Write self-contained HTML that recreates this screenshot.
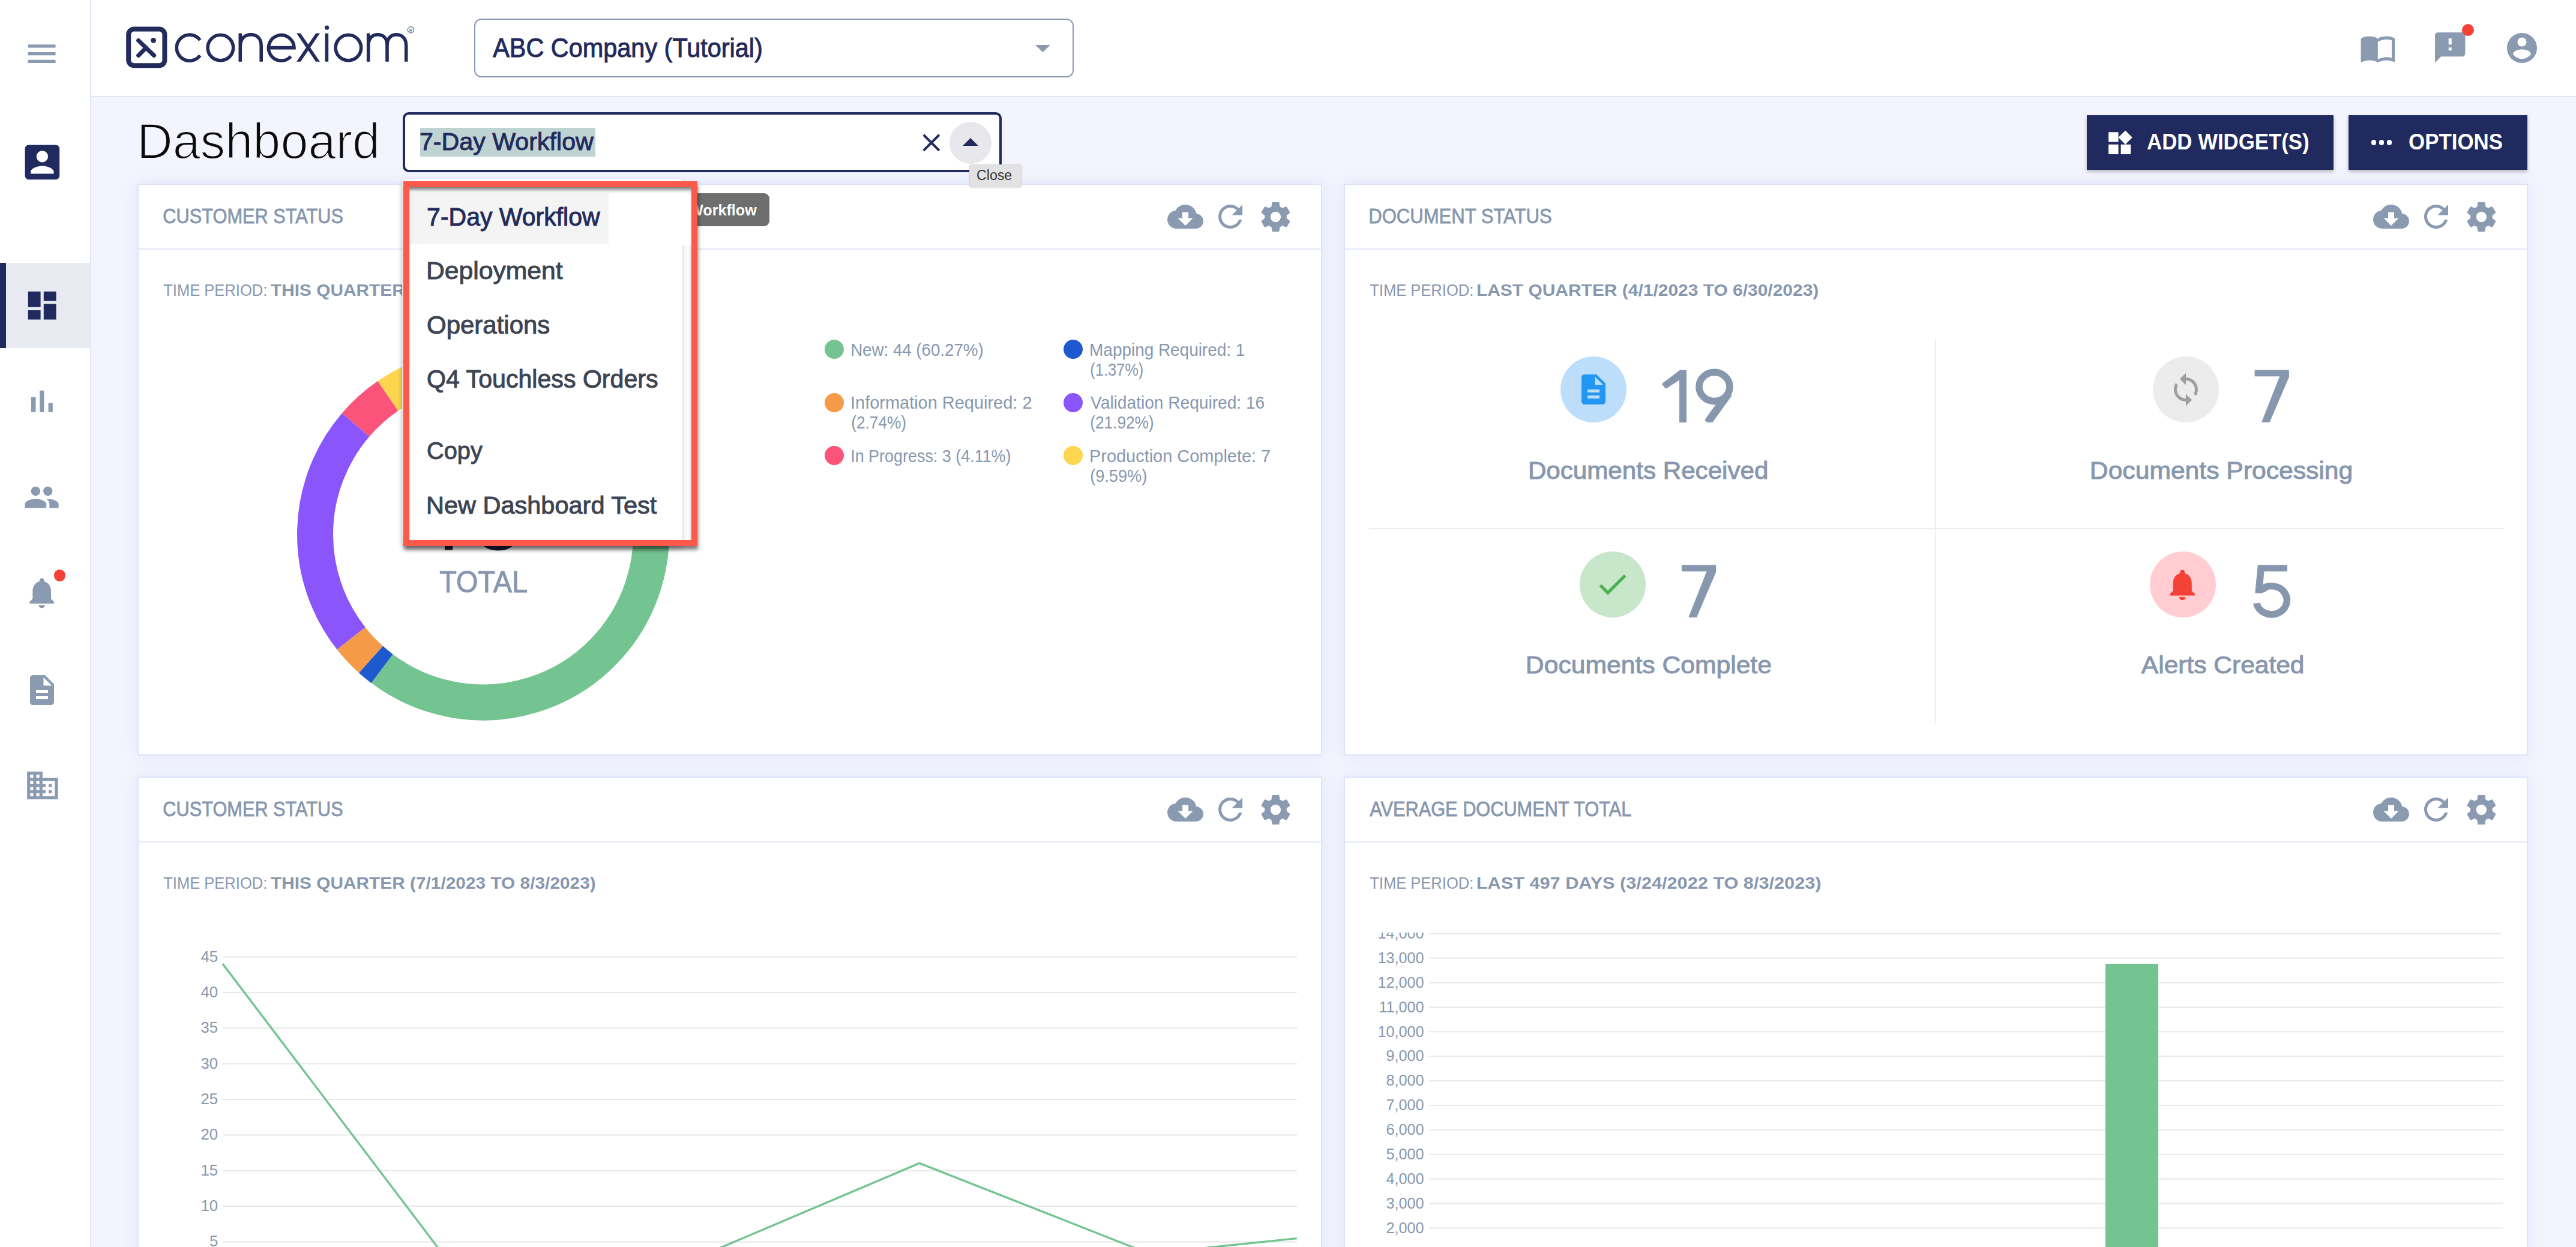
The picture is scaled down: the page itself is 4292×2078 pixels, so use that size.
<!DOCTYPE html>
<html><head><meta charset="utf-8"><style>*{margin:0;padding:0;box-sizing:border-box}
html,body{width:4292px;height:2078px;overflow:hidden;background:#f3f4fd;font-family:"Liberation Sans",sans-serif;position:relative}
.a{position:absolute}
.t{position:absolute;white-space:nowrap;line-height:1}
svg{display:block;overflow:visible}
.card{position:absolute;background:#fff;border:2px solid #dde4fa;box-shadow:0 0 28px rgba(110,140,235,.13)}
b{font-weight:bold}
</style></head><body>
<div class="a" style="left:0;top:0;width:150px;height:2078px;background:#fff"></div>
<div class="a" style="left:150px;top:0px;width:2px;height:2078px;background:#e1e6f9;"></div>
<svg class="a" style="left:39.10px;top:59.00px;" width="61.20" height="61.20" viewBox="0 0 24 24"><path fill="#8a9ab1" d="M3 18h18v-2H3v2zm0-5h18v-2H3v2zm0-7v2h18V6H3z"/></svg>
<svg class="a" style="left:31.60px;top:231.60px;" width="76.80" height="76.80" viewBox="0 0 24 24"><path fill="#212a5e" d="M3 5v14c0 1.1.89 2 2 2h14c1.1 0 2-.9 2-2V5c0-1.1-.9-2-2-2H5c-1.11 0-2 .9-2 2zm12 4c0 1.66-1.34 3-3 3s-3-1.34-3-3 1.34-3 3-3 3 1.34 3 3zm-9 8c0-2 4-3.1 6-3.1s6 1.1 6 3.1v1H6v-1z"/></svg>
<div class="a" style="left:0px;top:438px;width:150px;height:142px;background:#e8eaf1;"></div>
<div class="a" style="left:0px;top:438px;width:10px;height:142px;background:#212a5e;"></div>
<svg class="a" style="left:38.80px;top:478.30px;" width="62.40" height="62.40" viewBox="0 0 24 24"><path fill="#212a5e" d="M3 13h8V3H3v10zm0 8h8v-6H3v6zm10 0h8V11h-8v10zm0-18v6h8V3h-8z"/></svg>
<svg class="a" style="left:39.16px;top:638.16px;" width="61.68" height="61.68" viewBox="0 0 24 24"><path fill="#8a9ab1" d="M5 9.2h3V19H5zM10.6 5h2.8v14h-2.8zm5.6 8H19v6h-2.8z"/></svg>
<svg class="a" style="left:39.20px;top:798.40px;" width="61.20" height="61.20" viewBox="0 0 24 24"><path fill="#8a9ab1" d="M16 11c1.66 0 2.99-1.34 2.99-3S17.66 5 16 5c-1.66 0-3 1.34-3 3s1.34 3 3 3zm-8 0c1.66 0 2.99-1.34 2.99-3S9.66 5 8 5C6.34 5 5 6.34 5 8s1.34 3 3 3zm0 2c-2.33 0-7 1.17-7 3.5V19h14v-2.5c0-2.33-4.67-3.5-7-3.5zm8 0c-.29 0-.62.02-.97.05 1.16.84 1.97 1.97 1.97 3.45V19h6v-2.5c0-2.33-4.67-3.5-7-3.5z"/></svg>
<svg class="a" style="left:39.28px;top:956.78px;" width="61.44" height="61.44" viewBox="0 0 24 24"><path fill="#8a9ab1" d="M12 22c1.1 0 2-.9 2-2h-4c0 1.1.89 2 2 2zm6-6v-5c0-3.07-1.64-5.64-4.5-6.32V4c0-.83-.67-1.5-1.5-1.5s-1.5.67-1.5 1.5v.68C7.63 5.36 6 7.92 6 11v5l-2 2v1h16v-1l-2-2z"/></svg>
<div class="a" style="left:89.80000000000001px;top:949.4px;width:19.2px;height:19.2px;border-radius:50%;background:#f44336;"></div>
<svg class="a" style="left:40.00px;top:1120.00px;" width="60.00" height="60.00" viewBox="0 0 24 24"><path fill="#8a9ab1" d="M14 2H6c-1.1 0-1.99.9-1.99 2L4 20c0 1.1.89 2 1.99 2H18c1.1 0 2-.9 2-2V8l-6-6zm2 16H8v-2h8v2zm0-4H8v-2h8v2zm-3-5V3.5L18.5 9H13z"/></svg>
<svg class="a" style="left:39.66px;top:1278.16px;" width="61.68" height="61.68" viewBox="0 0 24 24"><path fill="#8a9ab1" d="M12 7V3H2v18h20V7H12zM6 19H4v-2h2v2zm0-4H4v-2h2v2zm0-4H4V9h2v2zm0-4H4V5h2v2zm4 12H8v-2h2v2zm0-4H8v-2h2v2zm0-4H8V9h2v2zm0-4H8V5h2v2zm10 12h-8v-2h2v-2h-2v-2h2v-2h-2V9h8v10zm-2-8h-2v2h2v-2zm0 4h-2v2h2v-2z"/></svg>
<div class="a" style="left:152px;top:0px;width:4140px;height:160px;background:#fff;"></div>
<div class="a" style="left:152px;top:160px;width:4140px;height:2px;background:#e1e6f9;"></div>
<svg class="a" style="left:200px;top:35px" width="500" height="90" viewBox="200 35 500 90"><defs><clipPath id="xc"><rect x="480" y="55.6" width="70" height="47.1"/></clipPath></defs>
<rect x="214.2" y="48.5" width="60.2" height="60.7" rx="9" ry="9" fill="none" stroke="#222b5c" stroke-width="8"/>
<g stroke="#222b5c" stroke-width="7" stroke-linecap="round" fill="none">
<line x1="230.6" y1="67.5" x2="256.6" y2="92.4"/><line x1="230.6" y1="92.4" x2="243.5" y2="79.6"/></g>
<circle cx="255.6" cy="67.3" r="4.4" fill="#222b5c"/>
<g stroke="#222b5c" stroke-width="5.6" fill="none">
<path d="M333.3 66.8 A21.6 21.6 0 1 0 333.3 92.4"/>
<circle cx="367.4" cy="79.5" r="21.3"/>
<path d="M400.3 102.7 V55.6 M400.3 78 C400.3 63 409 57.8 418 57.8 C427 57.8 435.2 63 435.2 76 V102.7"/>
<path d="M447 79.6 H490 A21.3 21.3 0 1 0 484.6 94"/>
<path clip-path="url(#xc)" d="M494.5 51.2 L532.5 107.1 M532.5 51.2 L494.5 107.1"/>
<path d="M544.4 55.6 V102.7"/>
<circle cx="580.4" cy="79.5" r="21.3"/>
<path d="M613.7 102.7 V55.6 M613.7 76 C613.7 63 621 57.8 629.5 57.8 C638 57.8 645 63 645 76 V102.7 M645 76 C645 63 652 57.8 660.5 57.8 C669 57.8 676.7 63 676.7 76 V102.7"/>
</g>
<circle cx="544.6" cy="46.1" r="3.6" fill="#222b5c"/>
<circle cx="684.5" cy="49.8" r="5.2" fill="none" stroke="#222b5c" stroke-width="1"/>
<text x="684.5" y="52.5" font-size="7" text-anchor="middle" fill="#222b5c" font-family="Liberation Sans">R</text>
</svg>
<div class="a" style="left:790px;top:31px;width:999px;height:98px;border:2px solid #8a9ab4;border-radius:12px;background:#fff"></div>
<div id="company" class="t txt" style="left:821.49px;top:58.17px;font-size:43.91px;color:#222b5c;font-weight:normal;transform:scaleX(0.9432);transform-origin:3.51px 0;-webkit-text-stroke:1.00px #222b5c;">ABC Company (Tutorial)</div>
<svg class="a" style="left:1725px;top:75px" width="25" height="12" viewBox="0 0 25 12"><path d="M0 0H25L12.5 12z" fill="#8a9ab1"/></svg>
<svg class="a" style="left:3930.86px;top:48.79px;" width="61.68" height="61.68" viewBox="0 0 24 24"><path fill="#8a9ab1" d="M21 5c-1.11-.35-2.33-.5-3.5-.5-1.95 0-4.05.4-5.5 1.5-1.45-1.1-3.55-1.5-5.5-1.5S2.45 4.9 1 6v14.65c0 .25.25.5.5.5.1 0 .15-.05.25-.05C3.1 20.45 5.05 20 6.5 20c1.95 0 4.05.4 5.5 1.5 1.35-.85 3.8-1.5 5.5-1.5 1.65 0 3.35.3 4.75 1.05.1.05.15.05.25.05.25 0 .5-.25.5-.5V6c-.6-.45-1.25-.75-2-1zm0 13.5c-1.1-.35-2.3-.5-3.5-.5-1.7 0-4.15.65-5.5 1.5V8c1.35-.85 3.8-1.5 5.5-1.5 1.2 0 2.4.15 3.5.5v11.5z"/></svg>
<svg class="a" style="left:4051.76px;top:49.46px;" width="60.48" height="60.48" viewBox="0 0 24 24"><path fill="#8a9ab1" d="M20 2H4c-1.1 0-1.99.9-1.99 2L2 22l4-4h14c1.1 0 2-.9 2-2V4c0-1.1-.9-2-2-2zm-7 12h-2v-2h2v2zm0-4h-2V6h2v4z"/></svg>
<div class="a" style="left:4101.7px;top:40px;width:20px;height:20px;border-radius:50%;background:#f44336;"></div>
<svg class="a" style="left:4171.80px;top:49.70px;" width="60.00" height="60.00" viewBox="0 0 24 24"><path fill="#8a9ab1" d="M12 2C6.48 2 2 6.48 2 12s4.48 10 10 10 10-4.48 10-10S17.52 2 12 2zm0 3c1.66 0 3 1.34 3 3s-1.34 3-3 3-3-1.34-3-3 1.34-3 3-3zm0 14.2c-2.5 0-4.71-1.28-6-3.22.03-1.99 4-3.08 6-3.08 1.99 0 5.97 1.09 6 3.08-1.29 1.94-3.5 3.22-6 3.22z"/></svg>
<div id="dash" class="t txt" style="left:228.39px;top:194.78px;font-size:82.61px;color:#0b0b0b;font-weight:normal;transform:scaleX(1.0026);transform-origin:6.61px 0;-webkit-text-stroke:2px #f3f4fd;">Dashboard</div>
<div class="a" style="left:671px;top:187px;width:998px;height:100px;border:4.5px solid #1f2a5c;border-radius:10px;background:#fff"></div>
<div class="a" style="left:700px;top:213px;width:292px;height:48px;background:#bfd3d3;"></div>
<div id="wfin" class="t txt" style="left:699.33px;top:216.46px;font-size:40.87px;color:#222b5c;font-weight:normal;transform:scaleX(1.0077);transform-origin:3.27px 0;-webkit-text-stroke:0.98px #222b5c;">7-Day Workflow</div>
<svg class="a" style="left:1526.66px;top:213.16px;" width="49.68" height="49.68" viewBox="0 0 24 24"><path fill="#222b5c" d="M19 6.41L17.59 5 12 10.59 6.41 5 5 6.41 10.59 12 5 17.59 6.41 19 12 13.41 17.59 19 19 17.59 13.41 12z"/></svg>
<div class="a" style="left:1582px;top:203px;width:70px;height:70px;border-radius:50%;background:#e8e8ec;"></div>
<svg class="a" style="left:1604px;top:230px" width="26" height="13" viewBox="0 0 26 13"><path d="M0 13H26L13 0z" fill="#222b5c"/></svg>
<div class="a" style="left:3477px;top:192px;width:411px;height:91px;background:#212a5e;box-shadow:0 3px 6px rgba(0,0,0,.25)"></div>
<svg class="a" style="left:3507.05px;top:213.73px;" width="49.20" height="49.20" viewBox="0 0 24 24"><path fill="#fff" d="M13 13v8h8v-8h-8zM3 21h8v-8H3v8zM3 3v8h8V3H3zm13.66-1.31L11 7.34 16.66 13l5.66-5.66-5.66-5.65z"/></svg>
<div id="addw" class="t txt" style="left:3577.10px;top:218.70px;font-size:36.23px;color:#fff;font-weight:bold;transform:scaleX(0.9603);transform-origin:2.90px 0;">ADD WIDGET(S)</div>
<div class="a" style="left:3913px;top:192px;width:298px;height:91px;background:#212a5e;box-shadow:0 3px 6px rgba(0,0,0,.25)"></div>
<div class="a" style="left:3950.7px;top:233.29999999999998px;width:8.6px;height:8.6px;border-radius:50%;background:#fff;"></div>
<div class="a" style="left:3963.7px;top:233.29999999999998px;width:8.6px;height:8.6px;border-radius:50%;background:#fff;"></div>
<div class="a" style="left:3976.7px;top:233.29999999999998px;width:8.6px;height:8.6px;border-radius:50%;background:#fff;"></div>
<div id="opts" class="t txt" style="left:4013.10px;top:218.70px;font-size:36.23px;color:#fff;font-weight:bold;transform:scaleX(0.9627);transform-origin:2.90px 0;">OPTIONS</div>
<div class="card" style="left:229px;top:306px;width:1974px;height:952.5px"></div>
<div class="a" style="left:231px;top:414px;width:1970px;height:2px;background:#e3e8f8;"></div>
<div id="ct1" class="t txt" style="left:271.22px;top:342.93px;font-size:34.78px;color:#8797ae;font-weight:normal;transform:scaleX(0.8847);transform-origin:2.78px 0;-webkit-text-stroke:0.83px #8797ae;">CUSTOMER STATUS</div>
<div id="tp1n" class="t txt" style="left:271.72px;top:468.73px;font-size:28.55px;color:#8797ae;font-weight:normal;transform:scaleX(0.8942);transform-origin:2.28px 0;">TIME PERIOD:</div>
<div id="tp1b" class="t txt" style="left:451.12px;top:468.73px;font-size:28.55px;color:#8797ae;font-weight:bold;transform:scaleX(1.0454);transform-origin:2.28px 0;">THIS QUARTER (7/1/2023 TO 8/3/2023)</div>
<svg class="a" style="left:1945.00px;top:331.00px;" width="60.00" height="60.00" viewBox="0 0 24 24"><path fill="#8a9ab1" d="M19.35 10.04C18.67 6.59 15.64 4 12 4 9.11 4 6.6 5.64 5.35 8.04 2.34 8.36 0 10.91 0 14c0 3.31 2.69 6 6 6h13c2.76 0 5-2.24 5-5 0-2.64-2.05-4.78-4.65-4.96zM17 13l-5 5-5-5h3V9h4v4h3z"/></svg>
<svg class="a" style="left:2020.00px;top:330.50px;" width="60.00" height="60.00" viewBox="0 0 24 24"><path fill="#8a9ab1" d="M17.65 6.35C16.2 4.9 14.21 4 12 4c-4.42 0-7.99 3.58-7.99 8s3.57 8 7.99 8c3.73 0 6.84-2.55 7.73-6h-2.08c-.82 2.33-3.04 4-5.65 4-3.31 0-6-2.69-6-6s2.69-6 6-6c1.66 0 3.14.69 4.22 1.78L13 11h7V4l-2.35 2.35z"/></svg>
<svg class="a" style="left:2095.60px;top:331.60px;" width="58.80" height="58.80" viewBox="0 0 24 24"><path fill="#8a9ab1" d="M19.43 12.98c.04-.32.07-.64.07-.98s-.03-.66-.07-.98l2.11-1.65c.19-.15.24-.42.12-.64l-2-3.46c-.12-.22-.39-.3-.61-.22l-2.49 1c-.52-.4-1.08-.73-1.69-.98l-.38-2.65C14.46 2.18 14.25 2 14 2h-4c-.25 0-.46.18-.49.42l-.38 2.65c-.61.25-1.17.59-1.69.98l-2.49-1c-.23-.09-.49 0-.61.22l-2 3.46c-.13.22-.07.49.12.64l2.11 1.65c-.04.32-.07.65-.07.98s.03.66.07.98l-2.11 1.65c-.19.15-.24.42-.12.64l2 3.46c.12.22.39.3.61.22l2.49-1c.52.4 1.08.73 1.69.98l.38 2.65c.03.24.24.42.49.42h4c.25 0 .46-.18.49-.42l.38-2.65c.61-.25 1.17-.59 1.69-.98l2.49 1c.23.09.49 0 .61-.22l2-3.46c.12-.22.07-.49-.12-.64l-2.11-1.65zM12 15.5c-1.93 0-3.5-1.57-3.5-3.5s1.57-3.5 3.5-3.5 3.5 1.57 3.5 3.5-1.57 3.5-3.5 3.5z"/></svg>
<div class="card" style="left:2239px;top:306px;width:1973px;height:952.5px"></div>
<div class="a" style="left:2241px;top:414px;width:1969px;height:2px;background:#e3e8f8;"></div>
<div id="ct2" class="t txt" style="left:2280.22px;top:342.93px;font-size:34.78px;color:#8797ae;font-weight:normal;transform:scaleX(0.8930);transform-origin:2.78px 0;-webkit-text-stroke:0.83px #8797ae;">DOCUMENT STATUS</div>
<div id="tp2n" class="t txt" style="left:2281.72px;top:468.73px;font-size:28.55px;color:#8797ae;font-weight:normal;transform:scaleX(0.8942);transform-origin:2.28px 0;">TIME PERIOD:</div>
<div id="tp2b" class="t txt" style="left:2460.12px;top:468.73px;font-size:28.55px;color:#8797ae;font-weight:bold;transform:scaleX(1.0492);transform-origin:2.28px 0;">LAST QUARTER (4/1/2023 TO 6/30/2023)</div>
<svg class="a" style="left:3954.00px;top:331.00px;" width="60.00" height="60.00" viewBox="0 0 24 24"><path fill="#8a9ab1" d="M19.35 10.04C18.67 6.59 15.64 4 12 4 9.11 4 6.6 5.64 5.35 8.04 2.34 8.36 0 10.91 0 14c0 3.31 2.69 6 6 6h13c2.76 0 5-2.24 5-5 0-2.64-2.05-4.78-4.65-4.96zM17 13l-5 5-5-5h3V9h4v4h3z"/></svg>
<svg class="a" style="left:4029.00px;top:330.50px;" width="60.00" height="60.00" viewBox="0 0 24 24"><path fill="#8a9ab1" d="M17.65 6.35C16.2 4.9 14.21 4 12 4c-4.42 0-7.99 3.58-7.99 8s3.57 8 7.99 8c3.73 0 6.84-2.55 7.73-6h-2.08c-.82 2.33-3.04 4-5.65 4-3.31 0-6-2.69-6-6s2.69-6 6-6c1.66 0 3.14.69 4.22 1.78L13 11h7V4l-2.35 2.35z"/></svg>
<svg class="a" style="left:4104.60px;top:331.60px;" width="58.80" height="58.80" viewBox="0 0 24 24"><path fill="#8a9ab1" d="M19.43 12.98c.04-.32.07-.64.07-.98s-.03-.66-.07-.98l2.11-1.65c.19-.15.24-.42.12-.64l-2-3.46c-.12-.22-.39-.3-.61-.22l-2.49 1c-.52-.4-1.08-.73-1.69-.98l-.38-2.65C14.46 2.18 14.25 2 14 2h-4c-.25 0-.46.18-.49.42l-.38 2.65c-.61.25-1.17.59-1.69.98l-2.49-1c-.23-.09-.49 0-.61.22l-2 3.46c-.13.22-.07.49.12.64l2.11 1.65c-.04.32-.07.65-.07.98s.03.66.07.98l-2.11 1.65c-.19.15-.24.42-.12.64l2 3.46c.12.22.39.3.61.22l2.49-1c.52.4 1.08.73 1.69.98l.38 2.65c.03.24.24.42.49.42h4c.25 0 .46-.18.49-.42l.38-2.65c.61-.25 1.17-.59 1.69-.98l2.49 1c.23.09.49 0 .61-.22l2-3.46c.12-.22.07-.49-.12-.64l-2.11-1.65zM12 15.5c-1.93 0-3.5-1.57-3.5-3.5s1.57-3.5 3.5-3.5 3.5 1.57 3.5 3.5-1.57 3.5-3.5 3.5z"/></svg>
<div class="card" style="left:229px;top:1294px;width:1974px;height:906px"></div>
<div class="a" style="left:231px;top:1402px;width:1970px;height:2px;background:#e3e8f8;"></div>
<div id="ct3" class="t txt" style="left:271.22px;top:1330.93px;font-size:34.78px;color:#8797ae;font-weight:normal;transform:scaleX(0.8837);transform-origin:2.78px 0;-webkit-text-stroke:0.83px #8797ae;">CUSTOMER STATUS</div>
<div id="tp3n" class="t txt" style="left:271.72px;top:1456.73px;font-size:28.55px;color:#8797ae;font-weight:normal;transform:scaleX(0.8942);transform-origin:2.28px 0;">TIME PERIOD:</div>
<div id="tp3b" class="t txt" style="left:451.12px;top:1456.73px;font-size:28.55px;color:#8797ae;font-weight:bold;transform:scaleX(1.0454);transform-origin:2.28px 0;">THIS QUARTER (7/1/2023 TO 8/3/2023)</div>
<svg class="a" style="left:1945.00px;top:1319.00px;" width="60.00" height="60.00" viewBox="0 0 24 24"><path fill="#8a9ab1" d="M19.35 10.04C18.67 6.59 15.64 4 12 4 9.11 4 6.6 5.64 5.35 8.04 2.34 8.36 0 10.91 0 14c0 3.31 2.69 6 6 6h13c2.76 0 5-2.24 5-5 0-2.64-2.05-4.78-4.65-4.96zM17 13l-5 5-5-5h3V9h4v4h3z"/></svg>
<svg class="a" style="left:2020.00px;top:1318.50px;" width="60.00" height="60.00" viewBox="0 0 24 24"><path fill="#8a9ab1" d="M17.65 6.35C16.2 4.9 14.21 4 12 4c-4.42 0-7.99 3.58-7.99 8s3.57 8 7.99 8c3.73 0 6.84-2.55 7.73-6h-2.08c-.82 2.33-3.04 4-5.65 4-3.31 0-6-2.69-6-6s2.69-6 6-6c1.66 0 3.14.69 4.22 1.78L13 11h7V4l-2.35 2.35z"/></svg>
<svg class="a" style="left:2095.60px;top:1319.60px;" width="58.80" height="58.80" viewBox="0 0 24 24"><path fill="#8a9ab1" d="M19.43 12.98c.04-.32.07-.64.07-.98s-.03-.66-.07-.98l2.11-1.65c.19-.15.24-.42.12-.64l-2-3.46c-.12-.22-.39-.3-.61-.22l-2.49 1c-.52-.4-1.08-.73-1.69-.98l-.38-2.65C14.46 2.18 14.25 2 14 2h-4c-.25 0-.46.18-.49.42l-.38 2.65c-.61.25-1.17.59-1.69.98l-2.49-1c-.23-.09-.49 0-.61.22l-2 3.46c-.13.22-.07.49.12.64l2.11 1.65c-.04.32-.07.65-.07.98s.03.66.07.98l-2.11 1.65c-.19.15-.24.42-.12.64l2 3.46c.12.22.39.3.61.22l2.49-1c.52.4 1.08.73 1.69.98l.38 2.65c.03.24.24.42.49.42h4c.25 0 .46-.18.49-.42l.38-2.65c.61-.25 1.17-.59 1.69-.98l2.49 1c.23.09.49 0 .61-.22l2-3.46c.12-.22.07-.49-.12-.64l-2.11-1.65zM12 15.5c-1.93 0-3.5-1.57-3.5-3.5s1.57-3.5 3.5-3.5 3.5 1.57 3.5 3.5-1.57 3.5-3.5 3.5z"/></svg>
<div class="card" style="left:2239px;top:1294px;width:1973px;height:906px"></div>
<div class="a" style="left:2241px;top:1402px;width:1969px;height:2px;background:#e3e8f8;"></div>
<div id="ct4" class="t txt" style="left:2282.22px;top:1330.93px;font-size:34.78px;color:#8797ae;font-weight:normal;transform:scaleX(0.8838);transform-origin:2.78px 0;-webkit-text-stroke:0.83px #8797ae;">AVERAGE DOCUMENT TOTAL</div>
<div id="tp4n" class="t txt" style="left:2281.72px;top:1456.73px;font-size:28.55px;color:#8797ae;font-weight:normal;transform:scaleX(0.8942);transform-origin:2.28px 0;">TIME PERIOD:</div>
<div id="tp4b" class="t txt" style="left:2460.12px;top:1456.73px;font-size:28.55px;color:#8797ae;font-weight:bold;transform:scaleX(1.0746);transform-origin:2.28px 0;">LAST 497 DAYS (3/24/2022 TO 8/3/2023)</div>
<svg class="a" style="left:3954.00px;top:1319.00px;" width="60.00" height="60.00" viewBox="0 0 24 24"><path fill="#8a9ab1" d="M19.35 10.04C18.67 6.59 15.64 4 12 4 9.11 4 6.6 5.64 5.35 8.04 2.34 8.36 0 10.91 0 14c0 3.31 2.69 6 6 6h13c2.76 0 5-2.24 5-5 0-2.64-2.05-4.78-4.65-4.96zM17 13l-5 5-5-5h3V9h4v4h3z"/></svg>
<svg class="a" style="left:4029.00px;top:1318.50px;" width="60.00" height="60.00" viewBox="0 0 24 24"><path fill="#8a9ab1" d="M17.65 6.35C16.2 4.9 14.21 4 12 4c-4.42 0-7.99 3.58-7.99 8s3.57 8 7.99 8c3.73 0 6.84-2.55 7.73-6h-2.08c-.82 2.33-3.04 4-5.65 4-3.31 0-6-2.69-6-6s2.69-6 6-6c1.66 0 3.14.69 4.22 1.78L13 11h7V4l-2.35 2.35z"/></svg>
<svg class="a" style="left:4104.60px;top:1319.60px;" width="58.80" height="58.80" viewBox="0 0 24 24"><path fill="#8a9ab1" d="M19.43 12.98c.04-.32.07-.64.07-.98s-.03-.66-.07-.98l2.11-1.65c.19-.15.24-.42.12-.64l-2-3.46c-.12-.22-.39-.3-.61-.22l-2.49 1c-.52-.4-1.08-.73-1.69-.98l-.38-2.65C14.46 2.18 14.25 2 14 2h-4c-.25 0-.46.18-.49.42l-.38 2.65c-.61.25-1.17.59-1.69.98l-2.49-1c-.23-.09-.49 0-.61.22l-2 3.46c-.13.22-.07.49.12.64l2.11 1.65c-.04.32-.07.65-.07.98s.03.66.07.98l-2.11 1.65c-.19.15-.24.42-.12.64l2 3.46c.12.22.39.3.61.22l2.49-1c.52.4 1.08.73 1.69.98l.38 2.65c.03.24.24.42.49.42h4c.25 0 .46-.18.49-.42l.38-2.65c.61-.25 1.17-.59 1.69-.98l2.49 1c.23.09.49 0 .61-.22l2-3.46c.12-.22.07-.49-.12-.64l-2.11-1.65zM12 15.5c-1.93 0-3.5-1.57-3.5-3.5s1.57-3.5 3.5-3.5 3.5 1.57 3.5 3.5-1.57 3.5-3.5 3.5z"/></svg>
<svg class="a" style="left:0;top:0" width="2200" height="1300" viewBox="0 0 2200 1300"><path d="M805.00 610.50 A280 280 0 1 1 636.55 1114.16" stroke="#74c491" stroke-width="60" fill="none"/><path d="M636.55 1114.16 A280 280 0 0 1 617.94 1098.85" stroke="#1f59d0" stroke-width="60" fill="none"/><path d="M617.94 1098.85 A280 280 0 0 1 585.02 1063.73" stroke="#f59b48" stroke-width="60" fill="none"/><path d="M585.02 1063.73 A280 280 0 0 1 592.67 707.97" stroke="#8b55fc" stroke-width="60" fill="none"/><path d="M592.67 707.97 A280 280 0 0 1 646.32 659.80" stroke="#fa547a" stroke-width="60" fill="none"/><path d="M646.32 659.80 A280 280 0 0 1 805.00 610.50" stroke="#fdd54f" stroke-width="60" fill="none"/></svg>
<div id="n73" class="t txt" style="left:717.20px;top:802.25px;font-size:135.00px;color:#1b1f3b;font-weight:normal;transform:scaleX(1.0000);transform-origin:10.80px 0;-webkit-text-stroke:1.00px #1b1f3b;">73</div>
<div id="total" class="t txt" style="left:732.01px;top:946.42px;font-size:49.86px;color:#8797ae;font-weight:normal;transform:scaleX(0.9416);transform-origin:3.99px 0;-webkit-text-stroke:1.00px #8797ae;">TOTAL</div>
<div class="a" style="left:1374px;top:566px;width:32px;height:32px;border-radius:50%;background:#74c491;"></div>
<div id="lg0a" class="t txt" style="left:1416.66px;top:567.92px;font-size:29.28px;color:#8797ae;font-weight:normal;transform:scaleX(0.9459);transform-origin:2.34px 0;">New: 44 (60.27%)</div>
<div class="a" style="left:1772px;top:566px;width:32px;height:32px;border-radius:50%;background:#1f59d0;"></div>
<div id="lg1a" class="t txt" style="left:1814.66px;top:567.92px;font-size:29.28px;color:#8797ae;font-weight:normal;transform:scaleX(0.9537);transform-origin:2.34px 0;">Mapping Required: 1</div>
<div id="lg1b" class="t txt" style="left:1815.66px;top:600.92px;font-size:29.28px;color:#8797ae;font-weight:normal;transform:scaleX(0.8680);transform-origin:2.34px 0;">(1.37%)</div>
<div class="a" style="left:1374px;top:654.5px;width:32px;height:32px;border-radius:50%;background:#f59b48;"></div>
<div id="lg2a" class="t txt" style="left:1416.66px;top:656.42px;font-size:29.28px;color:#8797ae;font-weight:normal;transform:scaleX(0.9890);transform-origin:2.34px 0;">Information Required: 2</div>
<div id="lg2b" class="t txt" style="left:1417.66px;top:689.42px;font-size:29.28px;color:#8797ae;font-weight:normal;transform:scaleX(0.8960);transform-origin:2.34px 0;">(2.74%)</div>
<div class="a" style="left:1772px;top:654.5px;width:32px;height:32px;border-radius:50%;background:#8b55fc;"></div>
<div id="lg3a" class="t txt" style="left:1816.66px;top:656.42px;font-size:29.28px;color:#8797ae;font-weight:normal;transform:scaleX(0.9603);transform-origin:2.34px 0;">Validation Required: 16</div>
<div id="lg3b" class="t txt" style="left:1815.66px;top:689.42px;font-size:29.28px;color:#8797ae;font-weight:normal;transform:scaleX(0.8951);transform-origin:2.34px 0;">(21.92%)</div>
<div class="a" style="left:1374px;top:743px;width:32px;height:32px;border-radius:50%;background:#fa547a;"></div>
<div id="lg4a" class="t txt" style="left:1416.66px;top:744.92px;font-size:29.28px;color:#8797ae;font-weight:normal;transform:scaleX(0.9199);transform-origin:2.34px 0;">In Progress: 3 (4.11%)</div>
<div class="a" style="left:1772px;top:743px;width:32px;height:32px;border-radius:50%;background:#fdd54f;"></div>
<div id="lg5a" class="t txt" style="left:1814.66px;top:744.92px;font-size:29.28px;color:#8797ae;font-weight:normal;transform:scaleX(0.9879);transform-origin:2.34px 0;">Production Complete: 7</div>
<div id="lg5b" class="t txt" style="left:1815.66px;top:777.92px;font-size:29.28px;color:#8797ae;font-weight:normal;transform:scaleX(0.9270);transform-origin:2.34px 0;">(9.59%)</div>
<div class="a" style="left:3224px;top:565px;width:2px;height:641px;background:#eceef2;"></div>
<div class="a" style="left:2281px;top:880px;width:1890px;height:2px;background:#eceef2;"></div>
<div class="a" style="left:2600px;top:594px;width:110px;height:110px;border-radius:50%;background:#bddefa;"></div>
<svg class="a" style="left:2625.00px;top:619.00px;" width="60.00" height="60.00" viewBox="0 0 24 24"><path fill="#2196f3" d="M14 2H6c-1.1 0-1.99.9-1.99 2L4 20c0 1.1.89 2 1.99 2H18c1.1 0 2-.9 2-2V8l-6-6zm2 16H8v-2h8v2zm0-4H8v-2h8v2zm-3-5V3.5L18.5 9H13z"/></svg>
<div id="s1l" class="t txt" style="left:2546.33px;top:763.66px;font-size:40.87px;color:#8797ae;font-weight:normal;transform:scaleX(1.0313);transform-origin:3.27px 0;-webkit-text-stroke:0.98px #8797ae;">Documents Received</div>
<div class="a" style="left:3587px;top:594px;width:110px;height:110px;border-radius:50%;background:#ececec;"></div>
<svg class="a" style="left:3612.00px;top:619.00px;" width="60.00" height="60.00" viewBox="0 0 24 24"><path fill="#9e9e9e" d="M12 4V1L8 5l4 4V6c3.31 0 6 2.69 6 6 0 1.01-.25 1.97-.7 2.8l1.46 1.46C19.54 15.03 20 13.57 20 12c0-4.42-3.58-8-8-8zm0 14c-3.31 0-6-2.69-6-6 0-1.01.25-1.97.7-2.8L5.24 7.74C4.46 8.97 4 10.43 4 12c0 4.42 3.58 8 8 8v3l4-4-4-4v3z"/></svg>
<div id="s2l" class="t txt" style="left:3481.73px;top:763.66px;font-size:40.87px;color:#8797ae;font-weight:normal;transform:scaleX(1.0434);transform-origin:3.27px 0;-webkit-text-stroke:0.98px #8797ae;">Documents Processing</div>
<div class="a" style="left:2632px;top:919px;width:110px;height:110px;border-radius:50%;background:#c8e6c9;"></div>
<svg class="a" style="left:2656.40px;top:943.40px;" width="61.20" height="61.20" viewBox="0 0 24 24"><path fill="#4caf50" d="M9 16.17L4.83 12l-1.42 1.41L9 19 21 7l-1.41-1.41z"/></svg>
<div id="s3l" class="t txt" style="left:2541.73px;top:1087.76px;font-size:40.87px;color:#8797ae;font-weight:normal;transform:scaleX(1.0438);transform-origin:3.27px 0;-webkit-text-stroke:0.98px #8797ae;">Documents Complete</div>
<div class="a" style="left:3581.5px;top:919px;width:110px;height:110px;border-radius:50%;background:#ffcdd2;"></div>
<svg class="a" style="left:3605.30px;top:942.80px;" width="62.40" height="62.40" viewBox="0 0 24 24"><path fill="#f44336" d="M12 22c1.1 0 2-.9 2-2h-4c0 1.1.89 2 2 2zm6-6v-5c0-3.07-1.64-5.64-4.5-6.32V4c0-.83-.67-1.5-1.5-1.5s-1.5.67-1.5 1.5v.68C7.63 5.36 6 7.92 6 11v5l-2 2v1h16v-1l-2-2z"/></svg>
<div id="s4l" class="t txt" style="left:3567.93px;top:1087.76px;font-size:40.87px;color:#8797ae;font-weight:normal;transform:scaleX(1.0400);transform-origin:3.27px 0;-webkit-text-stroke:0.98px #8797ae;">Alerts Created</div>
<svg class="a" style="left:0;top:0" width="4292" height="1100" viewBox="0 0 4292 1100"><path d="M2799.5 617.6 L2809.0 617.6 L2809.0 703.0 L2799.0 703.0 L2799.0 631.5 L2775.6 646.6 L2770.1 639.8 Z M3757.6 617.4 L3812.9 617.4 L3812.9 628.0 L3780.9 702.8 L3769.4 702.8 L3799.8 626.2 L3757.6 626.2 Z M2802.9 942.4 L2858.2 942.4 L2858.2 953.0 L2826.2 1027.8 L2814.7 1027.8 L2845.1 951.2 L2802.9 951.2 Z" fill="#8797ae" stroke="#8797ae" stroke-width="2" stroke-linejoin="round"/><ellipse cx="2856.4" cy="644.5" rx="25.5" ry="24.1" fill="none" stroke="#8797ae" stroke-width="11.6"/><path d="M2884.5 659.0 L2852.8 702.8 L2844.0 702.8 L2841.5 699.5 L2861.0 672.5 L2872.0 667.0 Z" fill="#8797ae" stroke="#8797ae" stroke-width="2" stroke-linejoin="round"/><path d="M3762.7 942.6 L3810.0 942.6 L3810.0 951.2 L3771.5 951.2 L3769.2 978.0 L3776.0 984.0 L3768.0 987.5 L3758.3 987.5 Z" fill="#8797ae" stroke="#8797ae" stroke-width="2" stroke-linejoin="round"/><path d="M3768.2 982.2 A25.6 23.6 0 1 1 3759.8 1005.6" fill="none" stroke="#8797ae" stroke-width="11.5"/><path d="M3754.2 1005.4 L3765 1005.4 L3767 1011 L3757 1011 Z" fill="#8797ae"/></svg>
<div id="ly45" class="t txt" style="left:334.54px;top:1581.50px;font-size:25.70px;color:#8797ae;font-weight:normal;transform:scaleX(1.0000);transform-origin:2.06px 0;">45</div>
<div id="ly40" class="t txt" style="left:334.54px;top:1640.86px;font-size:25.70px;color:#8797ae;font-weight:normal;transform:scaleX(1.0000);transform-origin:2.06px 0;">40</div>
<div id="ly35" class="t txt" style="left:334.54px;top:1700.22px;font-size:25.70px;color:#8797ae;font-weight:normal;transform:scaleX(1.0000);transform-origin:2.06px 0;">35</div>
<div id="ly30" class="t txt" style="left:334.54px;top:1759.58px;font-size:25.70px;color:#8797ae;font-weight:normal;transform:scaleX(1.0000);transform-origin:2.06px 0;">30</div>
<div id="ly25" class="t txt" style="left:334.54px;top:1818.94px;font-size:25.70px;color:#8797ae;font-weight:normal;transform:scaleX(1.0000);transform-origin:2.06px 0;">25</div>
<div id="ly20" class="t txt" style="left:334.54px;top:1878.30px;font-size:25.70px;color:#8797ae;font-weight:normal;transform:scaleX(1.0000);transform-origin:2.06px 0;">20</div>
<div id="ly15" class="t txt" style="left:334.54px;top:1937.66px;font-size:25.70px;color:#8797ae;font-weight:normal;transform:scaleX(1.0000);transform-origin:2.06px 0;">15</div>
<div id="ly10" class="t txt" style="left:334.54px;top:1997.02px;font-size:25.70px;color:#8797ae;font-weight:normal;transform:scaleX(1.0000);transform-origin:2.06px 0;">10</div>
<div id="ly5" class="t txt" style="left:349.04px;top:2056.39px;font-size:25.70px;color:#8797ae;font-weight:normal;transform:scaleX(1.0000);transform-origin:2.06px 0;">5</div>
<svg class="a" style="left:0;top:0" width="2200" height="2078" viewBox="0 0 2200 2078"><line x1="371" y1="1594.5" x2="2161" y2="1594.5" stroke="#e8e8e8" stroke-width="2"/><line x1="371" y1="1653.9" x2="2161" y2="1653.9" stroke="#e8e8e8" stroke-width="2"/><line x1="371" y1="1713.2" x2="2161" y2="1713.2" stroke="#e8e8e8" stroke-width="2"/><line x1="371" y1="1772.6" x2="2161" y2="1772.6" stroke="#e8e8e8" stroke-width="2"/><line x1="371" y1="1831.9" x2="2161" y2="1831.9" stroke="#e8e8e8" stroke-width="2"/><line x1="371" y1="1891.3" x2="2161" y2="1891.3" stroke="#e8e8e8" stroke-width="2"/><line x1="371" y1="1950.7" x2="2161" y2="1950.7" stroke="#e8e8e8" stroke-width="2"/><line x1="371" y1="2010.0" x2="2161" y2="2010.0" stroke="#e8e8e8" stroke-width="2"/><line x1="371" y1="2069.4" x2="2161" y2="2069.4" stroke="#e8e8e8" stroke-width="2"/><polyline points="371,1606.1 767,2128.4 1084.5,2128.4 1532,1938.3 1914.8,2089.1 2160.8,2063.6" fill="none" stroke="#74c491" stroke-width="3.4" stroke-linejoin="miter"/></svg>
<div id="by14" class="t txt" style="left:2295.38px;top:1542.98px;font-size:25.20px;color:#8797ae;font-weight:normal;transform:scaleX(1.0000);transform-origin:2.02px 0;">14,000</div>
<div id="by13" class="t txt" style="left:2295.38px;top:1583.88px;font-size:25.20px;color:#8797ae;font-weight:normal;transform:scaleX(1.0000);transform-origin:2.02px 0;">13,000</div>
<div id="by12" class="t txt" style="left:2295.38px;top:1624.78px;font-size:25.20px;color:#8797ae;font-weight:normal;transform:scaleX(1.0000);transform-origin:2.02px 0;">12,000</div>
<div id="by11" class="t txt" style="left:2297.38px;top:1665.68px;font-size:25.20px;color:#8797ae;font-weight:normal;transform:scaleX(1.0000);transform-origin:2.02px 0;">11,000</div>
<div id="by10" class="t txt" style="left:2295.38px;top:1706.58px;font-size:25.20px;color:#8797ae;font-weight:normal;transform:scaleX(1.0000);transform-origin:2.02px 0;">10,000</div>
<div id="by9" class="t txt" style="left:2309.38px;top:1747.48px;font-size:25.20px;color:#8797ae;font-weight:normal;transform:scaleX(1.0000);transform-origin:2.02px 0;">9,000</div>
<div id="by8" class="t txt" style="left:2309.38px;top:1788.38px;font-size:25.20px;color:#8797ae;font-weight:normal;transform:scaleX(1.0000);transform-origin:2.02px 0;">8,000</div>
<div id="by7" class="t txt" style="left:2309.38px;top:1829.28px;font-size:25.20px;color:#8797ae;font-weight:normal;transform:scaleX(1.0000);transform-origin:2.02px 0;">7,000</div>
<div id="by6" class="t txt" style="left:2309.38px;top:1870.18px;font-size:25.20px;color:#8797ae;font-weight:normal;transform:scaleX(1.0000);transform-origin:2.02px 0;">6,000</div>
<div id="by5" class="t txt" style="left:2309.38px;top:1911.08px;font-size:25.20px;color:#8797ae;font-weight:normal;transform:scaleX(1.0000);transform-origin:2.02px 0;">5,000</div>
<div id="by4" class="t txt" style="left:2309.38px;top:1951.98px;font-size:25.20px;color:#8797ae;font-weight:normal;transform:scaleX(1.0000);transform-origin:2.02px 0;">4,000</div>
<div id="by3" class="t txt" style="left:2309.38px;top:1992.88px;font-size:25.20px;color:#8797ae;font-weight:normal;transform:scaleX(1.0000);transform-origin:2.02px 0;">3,000</div>
<div id="by2" class="t txt" style="left:2309.38px;top:2033.78px;font-size:25.20px;color:#8797ae;font-weight:normal;transform:scaleX(1.0000);transform-origin:2.02px 0;">2,000</div>
<svg class="a" style="left:0;top:0" width="4292" height="2078" viewBox="0 0 4292 2078"><line x1="2381" y1="1555.7" x2="4167" y2="1555.7" stroke="#e8e8e8" stroke-width="2"/><line x1="2381" y1="1596.6" x2="4170.6" y2="1596.6" stroke="#e8e8e8" stroke-width="2"/><line x1="2381" y1="1637.5" x2="4170.6" y2="1637.5" stroke="#e8e8e8" stroke-width="2"/><line x1="2381" y1="1678.4" x2="4170.6" y2="1678.4" stroke="#e8e8e8" stroke-width="2"/><line x1="2381" y1="1719.3" x2="4170.6" y2="1719.3" stroke="#e8e8e8" stroke-width="2"/><line x1="2381" y1="1760.2" x2="4170.6" y2="1760.2" stroke="#e8e8e8" stroke-width="2"/><line x1="2381" y1="1801.1" x2="4170.6" y2="1801.1" stroke="#e8e8e8" stroke-width="2"/><line x1="2381" y1="1842.0" x2="4170.6" y2="1842.0" stroke="#e8e8e8" stroke-width="2"/><line x1="2381" y1="1882.9" x2="4170.6" y2="1882.9" stroke="#e8e8e8" stroke-width="2"/><line x1="2381" y1="1923.8" x2="4170.6" y2="1923.8" stroke="#e8e8e8" stroke-width="2"/><line x1="2381" y1="1964.7" x2="4170.6" y2="1964.7" stroke="#e8e8e8" stroke-width="2"/><line x1="2381" y1="2005.6" x2="4170.6" y2="2005.6" stroke="#e8e8e8" stroke-width="2"/><line x1="2381" y1="2046.5" x2="4170.6" y2="2046.5" stroke="#e8e8e8" stroke-width="2"/><rect x="3508" y="1606" width="88" height="600" fill="#74c491"/></svg>
<div class="a" style="left:2242px;top:1500px;width:138px;height:54px;background:#fff;"></div>
<div class="a" style="left:1100px;top:322px;width:182px;height:55px;background:#6e6e6e;border-radius:9px"></div>
<div id="wftip" class="t txt" style="left:1147.91px;top:337.13px;font-size:26.09px;color:#fff;font-weight:bold;transform:scaleX(0.9638);transform-origin:2.09px 0;">Workflow</div>
<div class="a" style="left:670px;top:298px;width:468px;height:612px;background:#fff;border-radius:8px;box-shadow:0 4px 10px rgba(0,0,0,.2)"></div>
<div class="a" style="left:682px;top:321px;width:332px;height:86px;background:#f4f4f4;"></div>
<div class="a" style="left:1137px;top:312px;width:15px;height:97px;background:#fff;"></div>
<div class="a" style="left:1137px;top:409px;width:15px;height:491px;background:linear-gradient(to right,#e0e0e0,#f8f8f8 25%,#fbfbfb 70%,#ececec);"></div>
<div id="mi0" class="t txt" style="left:710.61px;top:340.63px;font-size:42.32px;color:#222b5c;font-weight:normal;transform:scaleX(0.9688);transform-origin:3.39px 0;-webkit-text-stroke:1.00px #222b5c;">7-Day Workflow</div>
<div id="mi1" class="t txt" style="left:709.70px;top:431.29px;font-size:41.30px;color:#3d4452;font-weight:normal;transform:scaleX(1.0337);transform-origin:3.30px 0;-webkit-text-stroke:0.99px #3d4452;">Deployment</div>
<div id="mi2" class="t txt" style="left:710.67px;top:520.84px;font-size:41.59px;color:#3d4452;font-weight:normal;transform:scaleX(1.0099);transform-origin:3.33px 0;-webkit-text-stroke:1.00px #3d4452;">Operations</div>
<div id="mi3" class="t txt" style="left:710.65px;top:611.20px;font-size:41.88px;color:#3d4452;font-weight:normal;transform:scaleX(0.9820);transform-origin:3.35px 0;-webkit-text-stroke:1.00px #3d4452;">Q4 Touchless Orders</div>
<div id="mi4" class="t txt" style="left:710.72px;top:731.14px;font-size:41.01px;color:#3d4452;font-weight:normal;transform:scaleX(0.9685);transform-origin:3.28px 0;-webkit-text-stroke:0.98px #3d4452;">Copy</div>
<div id="mi5" class="t txt" style="left:709.75px;top:821.91px;font-size:40.58px;color:#3d4452;font-weight:normal;transform:scaleX(1.0227);transform-origin:3.25px 0;-webkit-text-stroke:0.97px #3d4452;">New Dashboard Test</div>
<div class="a" style="left:672px;top:302px;width:490px;height:608px;border:10.3px solid #fc594a;box-shadow:1px 6px 6px rgba(0,0,0,.5), inset 0 7px 6px -3px rgba(0,0,0,.55)"></div>
<div class="a" style="left:1615px;top:274px;width:87px;height:38px;background:#e2e2e2;border:1px solid #d8d8d8;border-radius:3px;box-shadow:0 1px 3px rgba(0,0,0,.12)"></div>
<div id="closetip" class="t txt" style="left:1627.09px;top:280.17px;font-size:23.91px;color:#333;font-weight:normal;transform:scaleX(0.9667);transform-origin:1.91px 0;">Close</div>
</body></html>
